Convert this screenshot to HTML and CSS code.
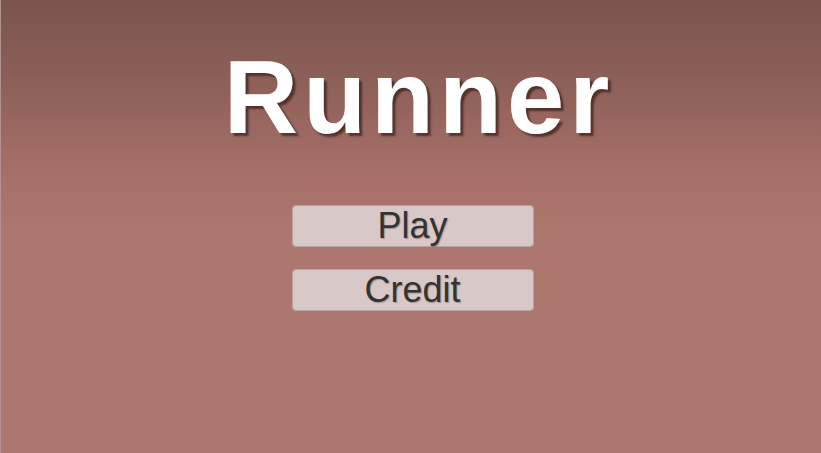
FILE: index.html
```html
<!DOCTYPE html>
<html>
<head>
<meta charset="utf-8">
<link rel="stylesheet" href="styles.css">
</head>
<body>
<div class="screen">
  <h1 class="title">Runner</h1>
  <div class="menu">
    <button class="btn">Play</button>
    <button class="btn">Credit</button>
  </div>
</div>
</body>
</html>
```
FILE: styles.css
```css
html, body {
  margin: 0;
  padding: 0;
  width: 821px;
  height: 453px;
  overflow: hidden;
}
.screen {
  box-sizing: border-box;
  width: 821px;
  height: 453px;
  border-left: 1px solid #b09390;
  background: linear-gradient(to bottom, #7a544e 0px, #8f6159 90px, #a56f67 170px, #ad776f 230px, #ad776f 453px);
  display: flex;
  flex-direction: column;
  align-items: center;
  font-family: "Liberation Sans", Arial, sans-serif;
}
.title {
  margin: 46px 0 0 0;
  font-size: 103px;
  line-height: 103px;
  font-weight: bold;
  letter-spacing: 5px;
  color: #ffffff;
  text-shadow: 3px 3px 2px rgba(70, 38, 34, 0.8);
  padding-left: 16px;
}
.menu {
  margin-top: 56px;
  margin-left: 3px;
  display: flex;
  flex-direction: column;
  gap: 22px;
}
.btn {
  width: 242px;
  height: 42px;
  box-sizing: border-box;
  border: 1px solid #b8a09e;
  border-radius: 4px;
  background: #d8c8c7;
  color: #333333;
  font-family: "Liberation Sans", Arial, sans-serif;
  font-size: 36px;
  line-height: 40px;
  padding: 0;
  text-shadow: 1px 1px 1px rgba(0,0,0,0.25);
}
```
